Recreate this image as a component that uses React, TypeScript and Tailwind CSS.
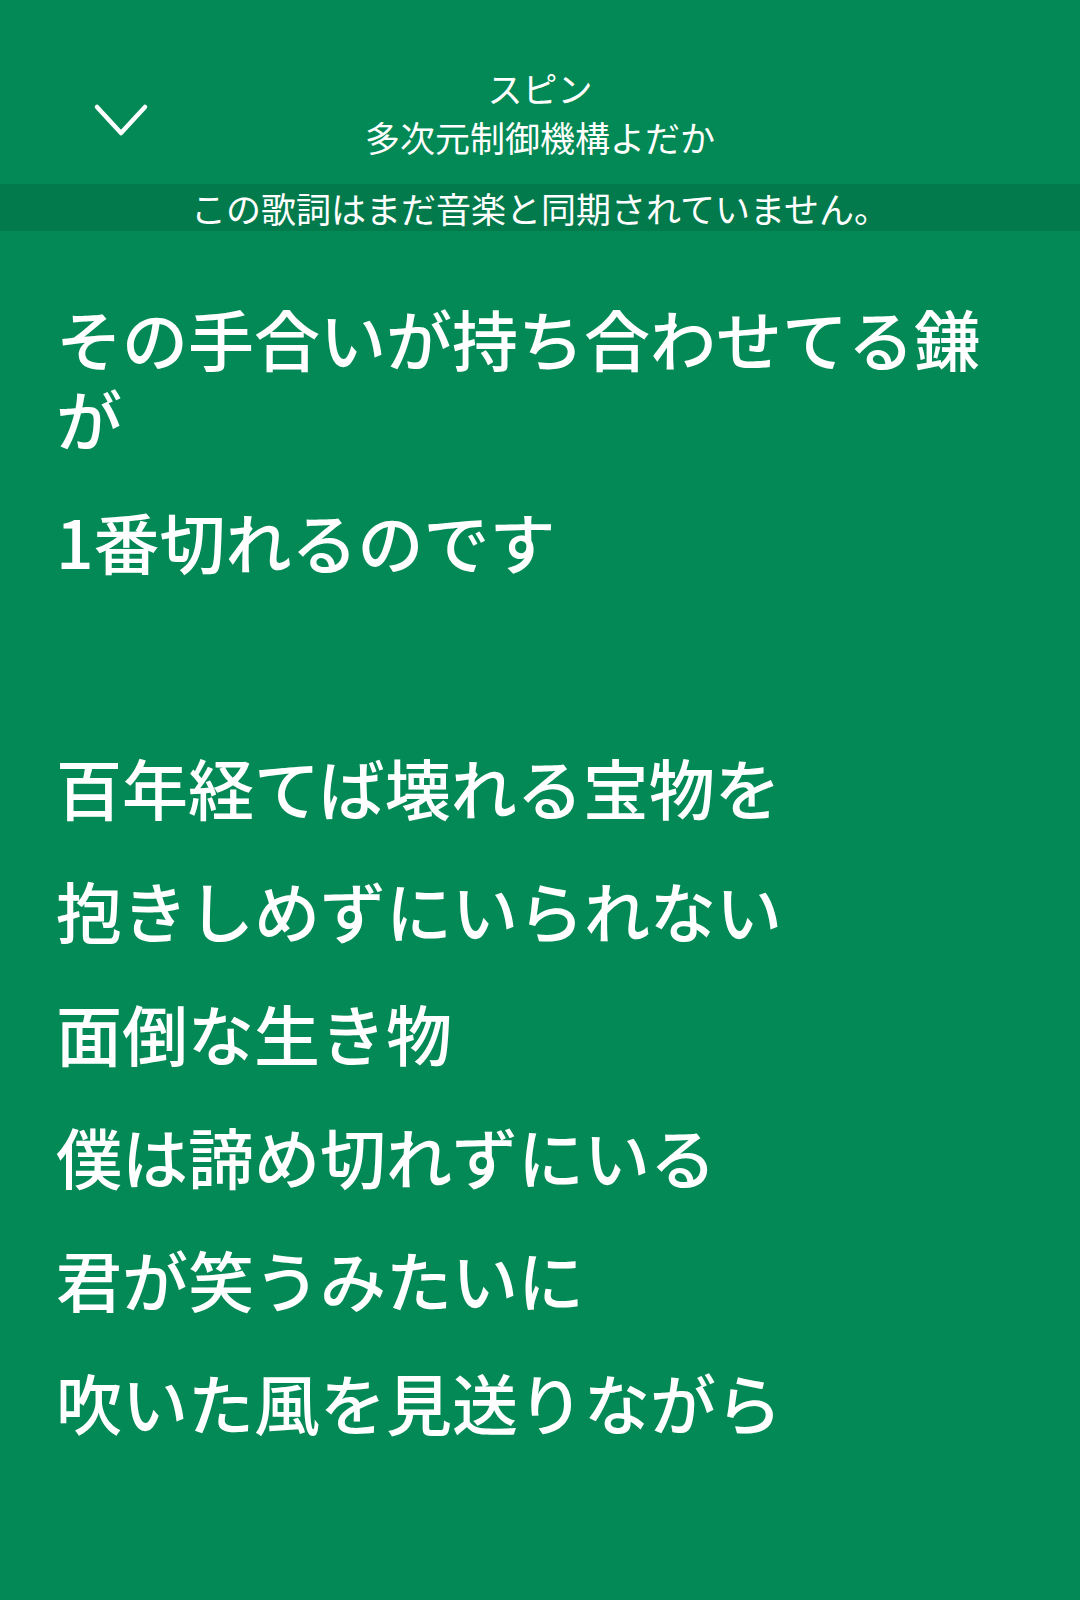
import React from 'react';

const lyrics = [
  'その手合いが持ち合わせてる鎌が',
  '1番切れるのです',
  '',
  '百年経てば壊れる宝物を',
  '抱きしめずにいられない',
  '面倒な生き物',
  '僕は諦め切れずにいる',
  '君が笑うみたいに',
  '吹いた風を見送りながら',
];

function ChevronDown() {
  return (
    <svg width="56" height="34" viewBox="0 0 56 34" fill="none">
      <polyline
        points="4,4 28,30 52,4"
        stroke="white"
        strokeWidth="4.5"
        strokeLinecap="round"
        strokeLinejoin="round"
      />
    </svg>
  );
}

export default function App() {
  return (
    <div
      className="min-h-screen w-full bg-[#038955] text-white"
      style={{ fontFamily: '"Noto Sans CJK JP", "Noto Sans", sans-serif' }}
    >
      {/* Header */}
      <div className="grid h-[184px] grid-cols-[1fr_auto_1fr] items-start pt-[63px]">
        <div className="pl-[93px] pt-[40px]">
          <ChevronDown />
        </div>
        <div className="flex flex-col items-center text-[35px] leading-[49px]">
          <span>スピン</span>
          <span>多次元制御機構よだか</span>
        </div>
        <div />
      </div>

      {/* Sync notice */}
      <div className="h-[47px] bg-[#037A4C] text-center text-[35px] leading-[47px]">
        この歌詞はまだ音楽と同期されていません。
      </div>

      {/* Lyrics */}
      <div className="flex flex-col gap-[43px] pl-[56px] pr-[56px] pt-[66px] pb-[80px]">
        {lyrics.map((line, i) => (
          <p key={i} className="min-h-[80px] text-[66px] font-medium leading-[80px]">
            {line}
          </p>
        ))}
      </div>
    </div>
  );
}
